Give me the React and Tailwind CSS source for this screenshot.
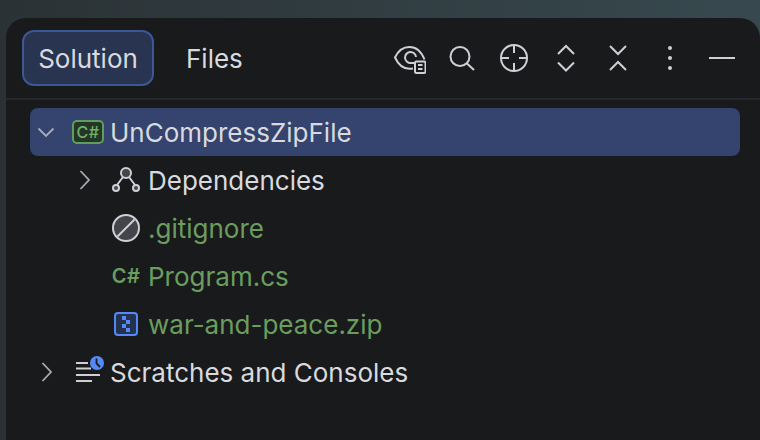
import React from 'react';

const ICON_STROKE = '#ced0d6';

const Chevron = ({ open }) => (
    <svg width="32" height="32" viewBox="0 0 32 32" fill="none" stroke="#a8adb5" strokeWidth="1.800">
        {open ? <path d="M8.500 12.500l7.500 7.500 7.500-7.500" /> : <path d="M12.500 7l8.500 9-8.500 9" />}
    </svg>
);

const EyeIcon = () => (
    <svg width="32" height="32" viewBox="0 0 32 32" fill="none" stroke={ICON_STROKE} strokeWidth="2">
        <path d="M19 26.500C17.500 26.800 16.500 26.800 15.500 26.800 9 26.800 4 22 1 15.500 4 9 9.500 5 15.500 5 22 5 27.500 10 30.500 17.500" />
        <path d="M20 21H17A5.500 5.500 0 1 1 22 15" />
        <rect x="21" y="19.500" width="10.500" height="11.500" rx="1.500" fill="#191a1c" />
        <path d="M24 23h4.500M24 27h4.500" />
    </svg>
);

const SearchIcon = () => (
    <svg width="32" height="32" viewBox="0 0 32 32" fill="none" stroke={ICON_STROKE} strokeWidth="2">
        <circle cx="14" cy="14.500" r="9.500" />
        <path d="M21 21.500l7 6.500" />
    </svg>
);

const TargetIcon = () => (
    <svg width="32" height="32" viewBox="0 0 32 32" fill="none" stroke={ICON_STROKE} strokeWidth="2">
        <circle cx="16" cy="16" r="13" />
        <path d="M16 3v8M16 21v8M3 16h8M21 16h8" />
    </svg>
);

const ExpandIcon = () => (
    <svg width="32" height="32" viewBox="0 0 32 32" fill="none" stroke={ICON_STROKE} strokeWidth="2">
        <path d="M8 12l8-8 8 8M8 20.500l8 8 8-8" />
    </svg>
);

const CollapseIcon = () => (
    <svg width="32" height="32" viewBox="0 0 32 32" fill="none" stroke={ICON_STROKE} strokeWidth="2">
        <path d="M8 4l8 8 8-8M8 28l8-8 8 8" />
    </svg>
);

const DotsIcon = () => (
    <svg width="32" height="32" viewBox="0 0 32 32" fill={ICON_STROKE}>
        <circle cx="16" cy="6" r="2" />
        <circle cx="16" cy="16" r="2" />
        <circle cx="16" cy="26" r="2" />
    </svg>
);

const MinusIcon = () => (
    <svg width="32" height="32" viewBox="0 0 32 32" fill="none" stroke={ICON_STROKE} strokeWidth="2">
        <path d="M3 16h26" />
    </svg>
);

const DependenciesIcon = () => (
    <svg width="32" height="32" viewBox="0 0 32 32" fill="none" stroke={ICON_STROKE} strokeWidth="2">
        <path d="M13 13l-6 8M19 13l6 8" />
        <circle cx="16" cy="9" r="5" fill="#43454a" />
        <circle cx="6" cy="24" r="3" fill="#43454a" />
        <circle cx="26" cy="24" r="3" fill="#43454a" />
    </svg>
);

const IgnoreIcon = () => (
    <svg width="32" height="32" viewBox="0 0 32 32" fill="none" stroke={ICON_STROKE} strokeWidth="2">
        <circle cx="16" cy="16" r="13" fill="#43454a" />
        <path d="M24.500 7.500L7.500 24.500" />
    </svg>
);

const ZipIcon = () => (
    <svg width="32" height="32" viewBox="0 0 32 32" fill="none">
        <rect x="5" y="5" width="22" height="22" rx="3" fill="#25324d" stroke="#548af7" strokeWidth="2" />
        <path d="M12 8h4v4h-4zM16 12h4v4h-4zM12 16h4v4h-4zM16 20h4v4h-4z" fill="#548af7" />
    </svg>
);

const ScratchesIcon = () => (
    <svg width="32" height="32" viewBox="0 0 32 32" fill="none">
        <path d="M4 7h12M4 12.500h15M4 19h24M4 25h16" stroke={ICON_STROKE} strokeWidth="2" />
        <circle cx="25" cy="7" r="7" fill="#548af7" />
        <path d="M24.500 2.500v5l3.500 3.500" stroke="#191a1c" strokeWidth="1.800" />
    </svg>
);

const Row = ({ indent, chevron, icon, label, green, selected }) => (
    <div className={`flex h-12 items-center rounded-lg ${selected ? 'bg-[#34446e]' : ''} ${indent}`}>
        <div className="flex w-8 justify-center">{chevron}</div>
        <div className="ml-[10px] flex w-8 justify-center">{icon}</div>
        <span className={`ml-[6px] ${green ? 'text-[#6b9e5e]' : 'text-[#d8dadf]'}`}>{label}</span>
    </div>
);

export default function App() {
    return (
        <div className="h-[440px] w-[760px] overflow-hidden bg-gradient-to-r from-[#2b3235] to-[#37494f] pl-[6px] pt-[18px] font-['Inter',sans-serif] text-[26px]">
            <div className="h-[440px] rounded-t-[20px] bg-[#191a1c]">
                {/* Header */}
                <div className="flex h-[82px] items-center border-b-2 border-[#26282b] pl-4 pr-[22px]">
                    <div className="flex h-14 w-[132px] items-center justify-center rounded-xl border-2 border-[#3c5795] bg-[#293450] text-[#d8dadf]">
                        Solution
                    </div>
                    <div className="ml-[32px] text-[#d8dadf]">Files</div>
                    <div className="ml-auto flex gap-5">
                        <EyeIcon />
                        <SearchIcon />
                        <TargetIcon />
                        <ExpandIcon />
                        <CollapseIcon />
                        <DotsIcon />
                        <MinusIcon />
                    </div>
                </div>

                {/* Tree */}
                <div className="ml-6 mr-5 mt-2">
                    <Row
                        chevron={<Chevron open />}
                        icon={
                            <div className="flex h-6 w-8 items-center justify-center rounded-[5px] border-2 border-[#5f9e5b] bg-[#253627] text-[16px] font-medium leading-none tracking-[0.5px] text-[#6fb26a]">
                                C#
                            </div>
                        }
                        label="UnCompressZipFile"
                        selected
                    />
                    <Row indent="pl-[38px]" chevron={<Chevron />} icon={<DependenciesIcon />} label="Dependencies" />
                    <Row indent="pl-[38px]" icon={<IgnoreIcon />} label=".gitignore" green />
                    <Row
                        indent="pl-[38px]"
                        icon={<span className="text-[20px] font-semibold leading-none tracking-[0.5px] text-[#6b9e5e]">C#</span>}
                        label="Program.cs"
                        green
                    />
                    <Row indent="pl-[38px]" icon={<ZipIcon />} label="war-and-peace.zip" green />
                    <Row chevron={<Chevron />} icon={<ScratchesIcon />} label="Scratches and Consoles" />
                </div>
            </div>
        </div>
    );
}
